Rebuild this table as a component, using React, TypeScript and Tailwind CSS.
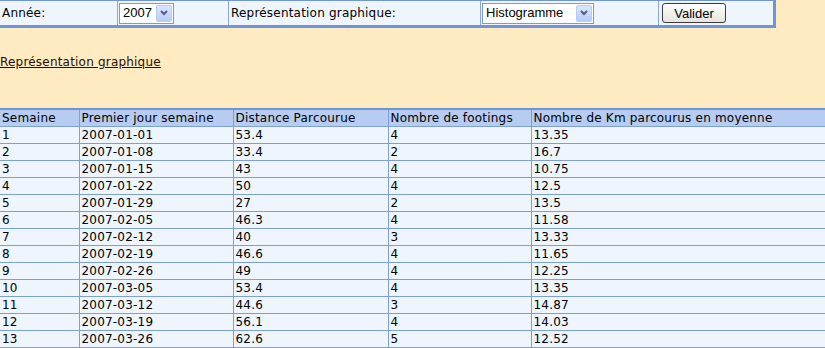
import React from 'react';

const rows: [number, string, string, number, string][] = [
  [1, '2007-01-01', '53.4', 4, '13.35'],
  [2, '2007-01-08', '33.4', 2, '16.7'],
  [3, '2007-01-15', '43', 4, '10.75'],
  [4, '2007-01-22', '50', 4, '12.5'],
  [5, '2007-01-29', '27', 2, '13.5'],
  [6, '2007-02-05', '46.3', 4, '11.58'],
  [7, '2007-02-12', '40', 3, '13.33'],
  [8, '2007-02-19', '46.6', 4, '11.65'],
  [9, '2007-02-26', '49', 4, '12.25'],
  [10, '2007-03-05', '53.4', 4, '13.35'],
  [11, '2007-03-12', '44.6', 3, '14.87'],
  [12, '2007-03-19', '56.1', 4, '14.03'],
  [13, '2007-03-26', '62.6', 5, '12.52'],
];

function Arrow() {
  return (
    <div className="w-[16px] h-[17px] rounded-[2px] border border-[#b9cdf5] bg-gradient-to-b from-[#dbe6fd] to-[#b8cbf6] flex items-center justify-center">
      <svg width="8" height="6" viewBox="0 0 8 6">
        <path d="M1 1 L4 4 L7 1" stroke="#4d6185" strokeWidth="2" fill="none" />
      </svg>
    </div>
  );
}

function Select({ value, width }: { value: string; width: string }) {
  return (
    <div className={`${width} h-[21px] border border-[#7f9db9] bg-white flex items-center justify-between pl-[3px] pr-[1px]`}>
      <span className="text-[13px] tracking-normal font-['Liberation_Sans',Arial,sans-serif] text-black">{value}</span>
      <Arrow />
    </div>
  );
}

export default function App() {
  const cell = 'border border-[#7d9fd9] px-[2px] pt-[1px] pb-0 h-[17px] leading-[15px] text-left font-normal whitespace-nowrap';
  return (
    <div className="w-[825px] h-[348px] overflow-hidden bg-[#ffebc2] font-['DejaVu_Sans',Verdana,sans-serif] text-[12px] tracking-[0.2px] text-black">
      <div className="w-[776px] h-[28px] bg-[#eef5fd] border-t border-r-[3px] border-b-[3px] border-[#6f95d6] flex">
        <div className="w-[117px] flex items-center pl-[2px]">Année:</div>
        <div className="w-[111px] border-l border-[#8aa8dc] flex items-center pl-[1px]">
          <Select value="2007" width="w-[55px]" />
        </div>
        <div className="w-[252px] border-l border-[#8aa8dc] flex items-center pl-[2px]">Représentation graphique:</div>
        <div className="w-[178px] border-l border-[#8aa8dc] flex items-center pl-[1px]">
          <Select value="Histogramme" width="w-[112px]" />
        </div>
        <div className="flex-1 border-l border-[#8aa8dc] flex items-center pl-[3px]">
          <button className="w-[64px] h-[20px] rounded-[3px] border border-[#3c3c3c] bg-gradient-to-b from-white to-[#e6e4dc] text-[13px] tracking-normal font-['Liberation_Sans',Arial,sans-serif] leading-none">
            Valider
          </button>
        </div>
      </div>
      <div className="pt-[26px] pb-[38px]">
        <a href="#" className="block h-[16px] leading-[16px] text-[#2a0f00] underline">Représentation graphique</a>
      </div>
      <table className="w-[825px] border-collapse border-t-2 border-[#6f95d6] table-fixed">
        <thead>
          <tr className="bg-[#b7ccf1]">
            <th className={`${cell} w-[79px] border-l-0`}>Semaine</th>
            <th className={`${cell} w-[154px]`}>Premier jour semaine</th>
            <th className={`${cell} w-[155px]`}>Distance Parcourue</th>
            <th className={`${cell} w-[143px]`}>Nombre de footings</th>
            <th className={`${cell} border-r-0`}>Nombre de Km parcourus en moyenne</th>
          </tr>
        </thead>
        <tbody className="bg-[#eef5fd]">
          {rows.map(r => (
            <tr key={r[0]}>
              <td className={`${cell} border-l-0`}>{r[0]}</td>
              <td className={cell}>{r[1]}</td>
              <td className={cell}>{r[2]}</td>
              <td className={cell}>{r[3]}</td>
              <td className={`${cell} border-r-0`}>{r[4]}</td>
            </tr>
          ))}
        </tbody>
      </table>
    </div>
  );
}
